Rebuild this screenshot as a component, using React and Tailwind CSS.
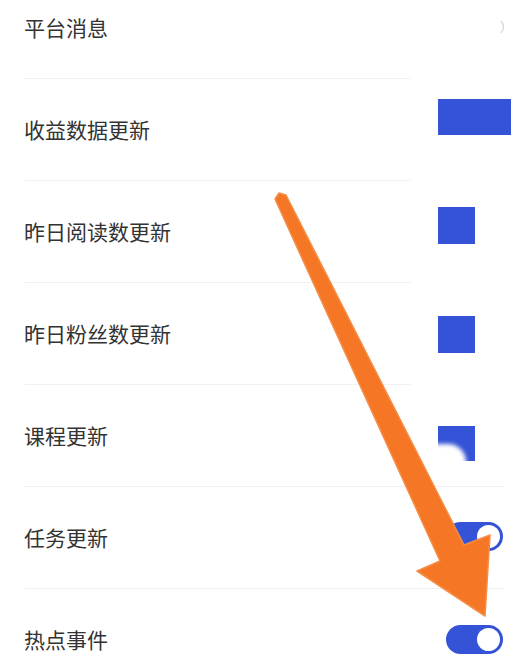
import React from "react";

const rows = [
  { label: "平台消息", kind: "ghost", line: "w-[386px]", shift: "" },
  { label: "收益数据更新", kind: "wide", line: "w-[386px]", shift: "mb-[26px]" },
  { label: "昨日阅读数更新", kind: "square", line: "w-[386px]", shift: "mb-[13px]" },
  { label: "昨日粉丝数更新", kind: "square", line: "w-[386px]", shift: "mt-[2px]" },
  { label: "课程更新", kind: "fade", line: "w-[479px]", shift: "mt-[15px]" },
  { label: "任务更新", kind: "toggle", line: "w-[479px]", shift: "mb-[2px]" },
  { label: "热点事件", kind: "toggle", line: "", shift: "" },
];

function Control({ kind }) {
  if (kind === "ghost") {
    return (
      <svg width="12" height="16" viewBox="0 0 12 16" className="ml-[60px] -mt-[2px]">
        <path d="M3 2 Q8 8 3 14" fill="none" stroke="#dcdcdc" strokeWidth="1.5" />
      </svg>
    );
  }
  if (kind === "wide") {
    return <div className="h-[36px] w-[73px] bg-[#3553d6]" />;
  }
  if (kind === "square") {
    return <div className="h-[37px] w-[37px] bg-[#3553d6]" />;
  }
  if (kind === "fade") {
    return (
      <div className="relative h-[35px] w-[37px] overflow-hidden bg-[#3553d6]">
        <div className="absolute left-[-28px] top-[18px] h-[36px] w-[56px] rounded-full bg-white blur-[2px]" />
      </div>
    );
  }
  return (
    <div className="ml-[8px] flex h-[29px] w-[57px] items-center justify-end rounded-full bg-[#3553d6] pr-[3px]">
      <div className="h-[23px] w-[23px] rounded-full bg-white" />
    </div>
  );
}

export default function App() {
  return (
    <div className="relative h-[671px] w-[530px] overflow-hidden bg-white font-['Noto_Sans_CJK_SC','Noto_Sans',sans-serif]">
      <div className="-mt-[23px] flex flex-col">
        {rows.map((row) => (
          <div key={row.label} className="flex h-[102px] flex-col">
            <div className="flex flex-1 items-center">
              <span className="w-[414px] pl-[24px] text-[21px] leading-none text-[#333333]">
                {row.label}
              </span>
              <div className={`flex w-[116px] items-center pl-[24px] ${row.shift}`}>
                <Control kind={row.kind} />
              </div>
            </div>
            <div className={`ml-[25px] h-px ${row.line ? "bg-[#f1f1f1]" : ""} ${row.line}`} />
          </div>
        ))}
      </div>

      <svg
        className="pointer-events-none absolute left-0 top-0"
        width="530"
        height="671"
        viewBox="0 0 530 671"
      >
        <polygon
          points="275,199 279,193 286,195 464,545 490,535 485,616 417,571 440,561"
          fill="#f57726"
          stroke="#f68d45"
          strokeWidth="1.5"
          strokeLinejoin="round"
        />
      </svg>
    </div>
  );
}
